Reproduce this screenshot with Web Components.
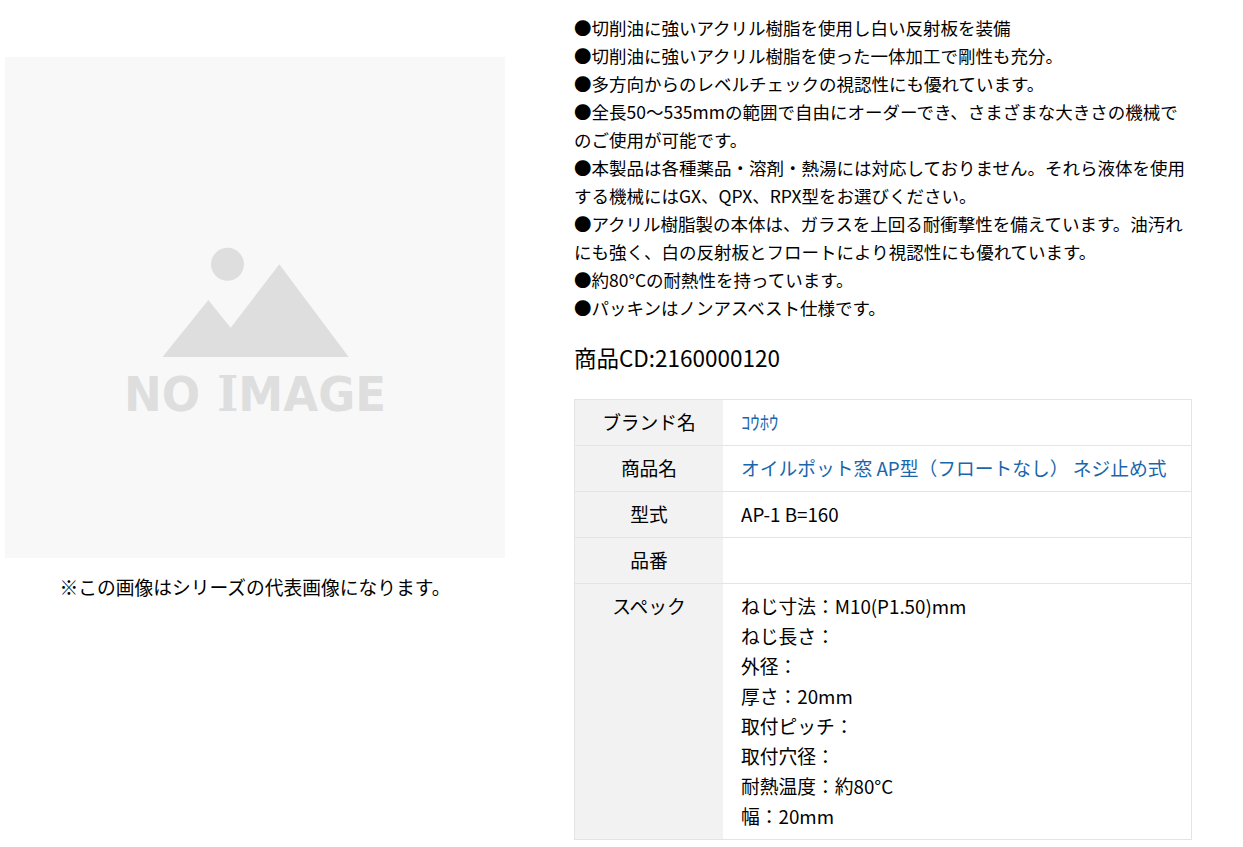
<!DOCTYPE html>
<html lang="ja">
<head>
<meta charset="utf-8">
<title>オイルポット窓 AP型</title>
<style>
  html, body { margin: 0; background: #fff; }
  body { font-family: "Noto Sans CJK JP", "Noto Sans", sans-serif; color: #000; }
</style>
</head>
<body>
<product-page>
  <product-photo slot="photo">※この画像はシリーズの代表画像になります。</product-photo>
  <feature-list>
    <li>●切削油に強いアクリル樹脂を使用し白い反射板を装備</li>
    <li>●切削油に強いアクリル樹脂を使った一体加工で剛性も充分。</li>
    <li>●多方向からのレベルチェックの視認性にも優れています。</li>
    <li>●全長50～535mmの範囲で自由にオーダーでき、さまざまな大きさの機械でのご使用が可能です。</li>
    <li>●本製品は各種薬品・溶剤・熱湯には対応しておりません。それら液体を使用する機械にはGX、QPX、RPX型をお選びください。</li>
    <li>●アクリル樹脂製の本体は、ガラスを上回る耐衝撃性を備えています。油汚れにも強く、白の反射板とフロートにより視認性にも優れています。</li>
    <li>●約80°Cの耐熱性を持っています。</li>
    <li>●パッキンはノンアスベスト仕様です。</li>
  </feature-list>
  <product-code>商品CD:2160000120</product-code>
  <spec-table>
    <spec-row label="ブランド名"><a class="small">ｺｳﾎｳ</a></spec-row>
    <spec-row label="商品名"><a>オイルポット窓 AP型（フロートなし） ネジ止め式</a></spec-row>
    <spec-row label="型式">AP-1 B=160</spec-row>
    <spec-row label="品番"></spec-row>
    <spec-row label="スペック" multi>
      <div>ねじ寸法：M10(P1.50)mm</div>
      <div>ねじ長さ：</div>
      <div>外径：</div>
      <div>厚さ：20mm</div>
      <div>取付ピッチ：</div>
      <div>取付穴径：</div>
      <div>耐熱温度：約80°C</div>
      <div>幅：20mm</div>
    </spec-row>
  </spec-table>
</product-page>

<script>
class ProductPage extends HTMLElement {
  constructor() {
    super();
    this.attachShadow({ mode: "open" }).innerHTML = `
      <style>
        :host { display: grid; grid-template-columns: 500px 618px; column-gap: 69px; padding: 14px 0 0 5px; }
        .left { padding-top: 43px; }
        .right { display: flex; flex-direction: column; }
      </style>
      <div class="left"><slot name="photo"></slot></div>
      <div class="right"><slot></slot></div>
    `;
  }
}

class ProductPhoto extends HTMLElement {
  constructor() {
    super();
    this.attachShadow({ mode: "open" }).innerHTML = `
      <style>
        :host { display: block; }
        svg { display: block; width: 500px; height: 501px; }
        .cap { margin-top: 15px; text-align: center; font-size: 18.75px; line-height: 28px; }
      </style>
      <svg viewBox="5 57 500 501" role="img">
        <rect x="5" y="57" width="500" height="501" fill="#f8f8f8"/>
        <circle cx="227.5" cy="264.3" r="16.5" fill="#dedede"/>
        <polygon points="162.5,357 208.3,300 230.7,327.7 279.3,264.3 348.7,357" fill="#dedede"/>
        <text transform="translate(124 410.7) scale(.94 1)" font-family="DejaVu Sans" font-weight="700"
          font-size="48" fill="#dedede">NO <tspan font-family="DejaVu Serif" dx="1.5">I</tspan>MAGE</text>
      </svg>
      <div class="cap"><slot></slot></div>
    `;
  }
}

class FeatureList extends HTMLElement {
  constructor() {
    super();
    this.attachShadow({ mode: "open" }).innerHTML = `
      <style>
        :host { display: block; font-size: 17.5px; line-height: 28px; }
        ::slotted(li) { display: block; }
      </style>
      <slot></slot>
    `;
  }
}

class ProductCode extends HTMLElement {
  constructor() {
    super();
    this.attachShadow({ mode: "open" }).innerHTML = `
      <style>
        :host { display: block; margin: 18px 0 25px; font-size: 22.5px; line-height: 34px; }
      </style>
      <slot></slot>
    `;
  }
}

class SpecTable extends HTMLElement {
  constructor() {
    super();
    this.attachShadow({ mode: "open" }).innerHTML = `
      <style>
        :host { display: block; border: 1px solid #e4e4e4; border-bottom: 0; }
      </style>
      <slot></slot>
    `;
  }
}

class SpecRow extends HTMLElement {
  constructor() {
    super();
    const label = this.getAttribute("label");
    this.attachShadow({ mode: "open" }).innerHTML = `
      <style>
        :host { display: grid; grid-template-columns: 148px 1fr; border-bottom: 1px solid #e4e4e4;
          font-size: 18.75px; line-height: 30px; }
        .th { background: #f2f2f2; text-align: center; padding: 7px 0 8px; }
        .td { padding: 7px 18px 8px; min-height: 30px; }
        ::slotted(a) { color: #1a66ac; }
      </style>
      <div class="th">${label}</div>
      <div class="td"><slot></slot></div>
    `;
  }
}

customElements.define("product-page", ProductPage);
customElements.define("product-photo", ProductPhoto);
customElements.define("feature-list", FeatureList);
customElements.define("product-code", ProductCode);
customElements.define("spec-table", SpecTable);
customElements.define("spec-row", SpecRow);
</script>
</body>
</html>
